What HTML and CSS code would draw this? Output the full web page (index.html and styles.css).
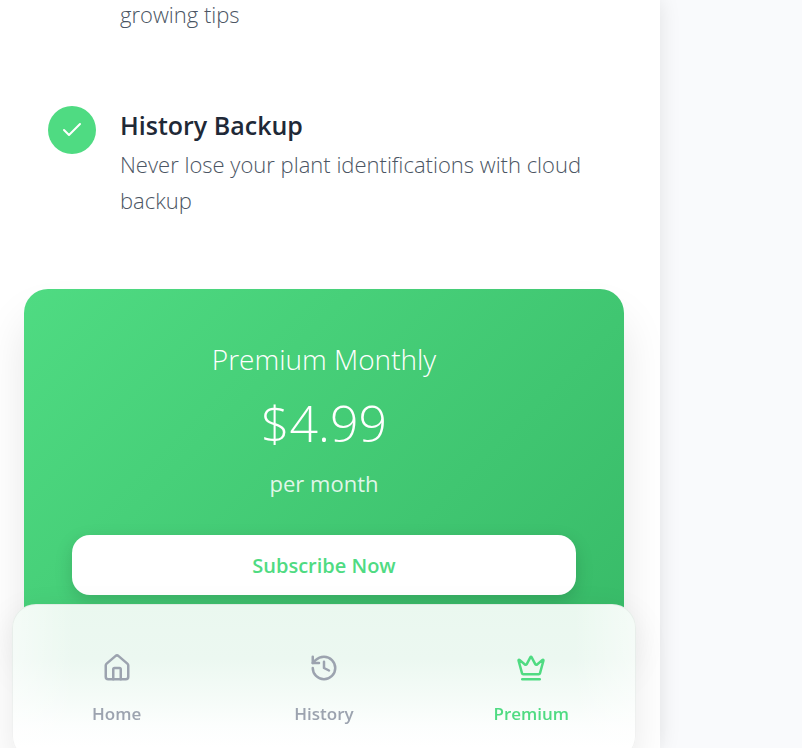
FILE: index.html
```html
<!DOCTYPE html>
<html lang="en">
<head>
<meta charset="utf-8">
<meta name="viewport" content="width=device-width, initial-scale=1">
<title>Premium</title>
<link rel="stylesheet" href="styles.css">
</head>
<body>
<div class="app">
  <main class="content">
    <ul class="features">
      <li class="feature feature-continued">
        <p class="feature-text">growing tips</p>
      </li>
      <li class="feature">
        <span class="feature-check">
          <svg class="check-icon" viewBox="0 0 24 24" aria-hidden="true"><path d="M20 6 9 17l-5-5"/></svg>
        </span>
        <div class="feature-body">
          <h2 class="feature-title">History Backup</h2>
          <p class="feature-text">Never lose your plant identifications with cloud backup</p>
        </div>
      </li>
    </ul>
    <section class="plan">
      <h2 class="plan-name">Premium Monthly</h2>
      <p class="plan-price">$4.99</p>
      <p class="plan-period">per month</p>
      <button class="subscribe" type="button">Subscribe Now</button>
    </section>
  </main>
</div>
<nav class="tabs">
  <a class="tab" href="#home">
    <svg class="tab-icon" viewBox="0 0 24 24" aria-hidden="true"><path d="M15 21v-8a1 1 0 0 0-1-1h-4a1 1 0 0 0-1 1v8"/><path d="M3 10a2 2 0 0 1 .709-1.528l7-5.999a2 2 0 0 1 2.582 0l7 5.999A2 2 0 0 1 21 10v9a2 2 0 0 1-2 2H5a2 2 0 0 1-2-2z"/></svg>
    <span>Home</span>
  </a>
  <a class="tab" href="#history">
    <svg class="tab-icon" viewBox="0 0 24 24" aria-hidden="true"><path d="M3 12a9 9 0 1 0 9-9 9.75 9.75 0 0 0-6.74 2.74L3 8"/><path d="M3 3v5h5"/><path d="M12 7v5l4 2"/></svg>
    <span>History</span>
  </a>
  <a class="tab tab-active" href="#premium" aria-current="page">
    <svg class="tab-icon" viewBox="0 0 24 24" aria-hidden="true"><path d="M11.562 3.266a.5.5 0 0 1 .876 0L15.39 8.87a1 1 0 0 0 1.516.294L21.183 5.5a.5.5 0 0 1 .798.519l-2.834 10.246a1 1 0 0 1-.956.734H5.81a1 1 0 0 1-.957-.734L2.02 6.02a.5.5 0 0 1 .798-.519l4.276 3.664a1 1 0 0 0 1.516-.294z"/><path d="M5 21h14"/></svg>
    <span>Premium</span>
  </a>
</nav>
</body>
</html>
```
FILE: styles.css
```css
* {
  box-sizing: border-box;
  margin: 0;
  padding: 0;
}

body {
  overflow: hidden;
  background: #f9fafc;
  font-family: "Segoe UI", "Open Sans", "Noto Sans", sans-serif;
  color: #1f2937;
}

.app {
  max-width: 660px;
  min-height: 100vh;
  padding-right: 12px;
  background: #fff;
  box-shadow: 0 0 20px rgba(0, 0, 0, 0.1);
}

.content {
  padding: 0 24px 60px;
}

.features {
  list-style: none;
}

.feature {
  display: flex;
  align-items: flex-start;
  gap: 24px;
  padding: 36px 24px;
}

.feature-continued {
  padding: 0 24px 42px 96px;
}

.feature-check {
  display: flex;
  align-items: center;
  justify-content: center;
  flex: none;
  width: 48px;
  height: 48px;
  border-radius: 50%;
  background: #4fdb82;
}

svg {
  fill: none;
  stroke: currentColor;
  stroke-width: 2;
  stroke-linecap: round;
  stroke-linejoin: round;
}

.check-icon {
  width: 24px;
  height: 24px;
  color: #fff;
}

.feature-title {
  font-size: 25px;
  line-height: 38px;
  font-weight: 600;
}

.feature-text {
  font-size: 22px;
  line-height: 36px;
  font-weight: 300;
  color: #4b5563;
}

.feature-title + .feature-text {
  margin-top: 2px;
}

.feature-continued .feature-text {
  line-height: 28px;
}

.plan {
  margin-top: 35px;
  padding: 48px;
  border-radius: 24px;
  background: linear-gradient(135deg, #4fdb82, #38bb68);
  box-shadow: 0 30px 45px rgba(0, 0, 0, 0.1);
  color: #fff;
  text-align: center;
}

.plan-name {
  font-size: 28px;
  line-height: 44px;
  font-weight: 300;
}

.plan-price {
  font-size: 50px;
  line-height: 84px;
  font-weight: 300;
}

.plan-period {
  font-size: 22px;
  line-height: 36px;
  color: rgba(255, 255, 255, 0.85);
}

.subscribe {
  width: 100%;
  height: 60px;
  margin-top: 34px;
  border: 0;
  border-radius: 18px;
  background: #fff;
  box-shadow: 0 6px 18px rgba(0, 0, 0, 0.15);
  color: #4fdb82;
  font: inherit;
  font-size: 20px;
  font-weight: 600;
}

.tabs {
  position: fixed;
  bottom: -12px;
  left: 12px;
  display: grid;
  grid-template-columns: repeat(3, 1fr);
  width: calc(100% - 24px);
  max-width: 624px;
  padding: 48px 0 32px;
  border: 1px solid rgba(0, 0, 0, 0.05);
  border-radius: 24px;
  background:
    linear-gradient(to right, rgba(255, 255, 255, 0.5), rgba(255, 255, 255, 0) 10%, rgba(255, 255, 255, 0) 90%, rgba(255, 255, 255, 0.5)),
    linear-gradient(to bottom, #eaf8ef, #ecf8f1 35%, #f4fbf7 58%, #fcfefd 78%, #fff 92%);
  background-origin: border-box;
  box-shadow: 0 12px 36px rgba(0, 0, 0, 0.09);
}

.tab {
  display: flex;
  flex-direction: column;
  align-items: center;
  gap: 18px;
  color: #9ca3af;
  font-size: 17px;
  line-height: 26px;
  font-weight: 600;
  text-decoration: none;
}

.tab-icon {
  width: 30px;
  height: 30px;
}

.tab-active {
  color: #4fdb82;
}
```
